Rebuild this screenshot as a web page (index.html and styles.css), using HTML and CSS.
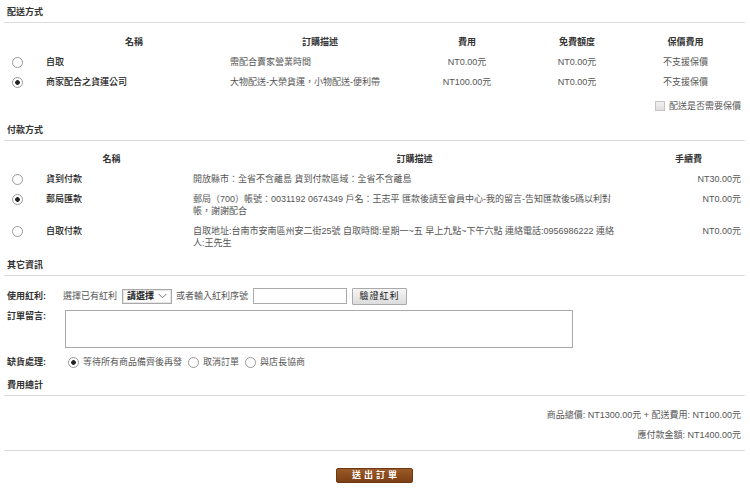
FILE: index.html
```html
<!DOCTYPE html>
<html lang="zh-Hant">
<head>
<meta charset="utf-8">
<title>訂單確認</title>
<link rel="stylesheet" href="styles.css">
</head>
<body>
<div class="page">
  <h2 class="sec-title">配送方式</h2>
  <div class="grid ship">
    <div class="cell th"></div>
    <div class="cell th th-name">名稱</div>
    <div class="cell th">訂購描述</div>
    <div class="cell th">費用</div>
    <div class="cell th">免費額度</div>
    <div class="cell th">保價費用</div>

    <div class="cell rad"><input type="radio" name="ship" class="radio"></div>
    <div class="cell name">自取</div>
    <div class="cell desc">需配合賣家營業時間</div>
    <div class="cell ctr">NT0.00元</div>
    <div class="cell ctr">NT0.00元</div>
    <div class="cell ctr">不支援保價</div>

    <div class="cell rad"><input type="radio" name="ship" class="radio" checked></div>
    <div class="cell name">商家配合之貨運公司</div>
    <div class="cell desc">大物配送-大榮貨運，小物配送-便利帶</div>
    <div class="cell ctr">NT100.00元</div>
    <div class="cell ctr">NT0.00元</div>
    <div class="cell ctr">不支援保價</div>
  </div>
  <div class="insure"><label><input type="checkbox" class="check"> 配送是否需要保價</label></div>

  <h2 class="sec-title sec-gap">付款方式</h2>
  <div class="grid pay">
    <div class="cell th"></div>
    <div class="cell th">名稱</div>
    <div class="cell th">訂購描述</div>
    <div class="cell th">手續費</div>

    <div class="cell rad"><input type="radio" name="pay" class="radio"></div>
    <div class="cell name">貨到付款</div>
    <div class="cell pdesc">開放縣市：全省不含離島 貨到付款區域：全省不含離島</div>
    <div class="cell fee">NT30.00元</div>

    <div class="cell rad"><input type="radio" name="pay" class="radio" checked></div>
    <div class="cell name">郵局匯款</div>
    <div class="cell pdesc">郵局（700）帳號：0031192 0674349 戶名：王志平 匯款後請至會員中心-我的留言-告知匯款後5碼以利對帳，謝謝配合</div>
    <div class="cell fee">NT0.00元</div>

    <div class="cell rad"><input type="radio" name="pay" class="radio"></div>
    <div class="cell name">自取付款</div>
    <div class="cell pdesc">自取地址:台南市安南區州安二街25號 自取時間:星期一~五 早上九點~下午六點 連絡電話:0956986222 連絡人:王先生</div>
    <div class="cell fee">NT0.00元</div>
  </div>

  <h2 class="sec-title">其它資訊</h2>
  <div class="form">
    <div class="frow">
      <span class="flabel">使用紅利:</span>
      <div class="fctl">
        <span>選擇已有紅利</span>
        <span class="select">請選擇<svg class="chev" viewBox="0 0 9 6" width="9" height="6"><path d="M0.5 0.8 L4.5 4.8 L8.5 0.8" fill="none" stroke="#777" stroke-width="1"/></svg></span>
        <span>或者輸入紅利序號</span>
        <input type="text" class="txt">
        <button type="button" class="btn">驗證紅利</button>
      </div>
    </div>
    <div class="frow frow-top">
      <span class="flabel">訂單留言:</span>
      <div class="fctl"><textarea class="area"></textarea></div>
    </div>
    <div class="frow">
      <span class="flabel">缺貨處理:</span>
      <div class="fctl opts">
        <label class="opt"><input type="radio" name="oos" class="radio" checked>等待所有商品備齊後再發</label>
        <label class="opt"><input type="radio" name="oos" class="radio">取消訂單</label>
        <label class="opt"><input type="radio" name="oos" class="radio">與店長協商</label>
      </div>
    </div>
  </div>

  <h2 class="sec-title sec-gap">費用總計</h2>
  <div class="summary">
    <div>商品總價: NT1300.00元 + 配送費用: NT100.00元</div>
    <div>應付款金額: NT1400.00元</div>
  </div>

  <div class="submit-wrap"><button type="button" class="submit">送出訂單</button></div>
</div>
</body>
</html>
```

FILE: styles.css
```css
* { box-sizing: border-box; }

body {
  margin: 0;
  background: #fff;
  font-family: "Liberation Sans", "Noto Sans CJK TC", sans-serif;
  font-size: 9px;
  line-height: 13px;
  color: #555;
}

.page {
  width: 750px;
  padding: 0 5px 0 4px;
}

.sec-title {
  margin: 0;
  padding: 6px 0 3px 3px;
  font-size: 9px;
  line-height: 13px;
  font-weight: bold;
  color: #333;
  border-bottom: 1px solid #dcdcdc;
}

.sec-gap { margin-top: 2px; }

.grid { display: grid; }

.ship {
  grid-template-columns: 26px 200px 180px 114px 106px 111px;
  margin-top: 9px;
}
.ship .cell { padding: 3.5px 0; line-height: 13px; }

.pay {
  grid-template-columns: 26px 163px 443px 105px;
  margin-top: 8px;
}
.pay .cell { padding: 4px 0; line-height: 12px; }

.th {
  text-align: center;
  font-weight: bold;
  color: #333;
}
.th-name { padding-left: 8px !important; }

.rad {
  display: flex;
  justify-content: center;
  align-items: flex-start;
}
.ship .rad { padding-top: 4.5px !important; }
.pay .rad { padding-top: 4.5px !important; }

.name {
  padding-left: 16px !important;
  color: #222;
  font-weight: 500;
}

.ctr { text-align: center; }

.pdesc { padding-right: 12px !important; }

.fee { text-align: right; }

.radio {
  appearance: none;
  -webkit-appearance: none;
  width: 11px;
  height: 11px;
  margin: 0;
  border: 1px solid #9a9a9a;
  border-radius: 50%;
  background: #fff;
  flex: none;
}
.radio:checked {
  background: radial-gradient(circle, #222 0, #222 2px, #fff 2.6px);
}

.insure {
  margin-top: 4px;
  height: 20px;
  line-height: 20px;
  text-align: right;
  padding-right: 4px;
}
.insure label {
  display: inline-flex;
  align-items: center;
  gap: 4px;
}
.check {
  appearance: none;
  -webkit-appearance: none;
  width: 10px;
  height: 10px;
  margin: 0;
  border: 1px solid #c4c4c4;
  background: linear-gradient(#f2f2f2, #dedede);
}

.form { margin-top: 11px; }

.frow {
  display: grid;
  grid-template-columns: 59px 1fr;
  align-items: center;
  min-height: 18px;
}
.frow + .frow { margin-top: 5px; }
.frow-top { align-items: start; }
.frow-top .flabel { padding-top: 0; }

.flabel {
  padding-left: 3px;
  font-weight: bold;
  color: #333;
}

.fctl {
  display: flex;
  align-items: center;
  gap: 4px;
}

.select {
  display: inline-flex;
  align-items: center;
  justify-content: space-between;
  width: 50px;
  height: 15px;
  margin-left: 1px;
  padding: 0 4px 0 4px;
  border: 1px solid #a9a9a9;
  box-shadow: inset 0 0 0 1px #e6e6e6;
  background: #fff;
  font-weight: bold;
  color: #222;
}
.chev { display: block; }

.txt {
  width: 94px;
  height: 16px;
  margin: 0 0 0 1px;
  padding: 0 2px;
  border: 1px solid #a9a9a9;
  font: inherit;
}

.btn {
  height: 17px;
  width: 55px;
  margin: 0 0 0 1px;
  padding: 0;
  border: 1px solid #a9a9a9;
  border-radius: 1px;
  background: linear-gradient(#f6f6f6, #dcdcdc);
  font: inherit;
  color: #222;
  letter-spacing: 1px;
}

.area {
  display: block;
  width: 508px;
  height: 38px;
  margin: 0 0 0 2px;
  border: 1px solid #a9a9a9;
  resize: none;
  font: inherit;
}

.opts { gap: 6px; padding-left: 5px; }
.opt {
  display: inline-flex;
  align-items: center;
  gap: 4px;
}

.summary {
  padding: 9px 4px 5px 0;
  text-align: right;
  line-height: 20px;
  border-bottom: 1px solid #dcdcdc;
}

.submit-wrap {
  padding-top: 17px;
  text-align: center;
}
.submit {
  width: 77px;
  height: 15px;
  padding: 0;
  border: 1px solid #6e3812;
  border-radius: 2px;
  background: linear-gradient(#9b5a28, #7c3f14);
  color: #fff;
  font: bold 9px/13px "Liberation Sans", "Noto Sans CJK TC", sans-serif;
  letter-spacing: 3px;
  text-indent: 3px;
}
```
